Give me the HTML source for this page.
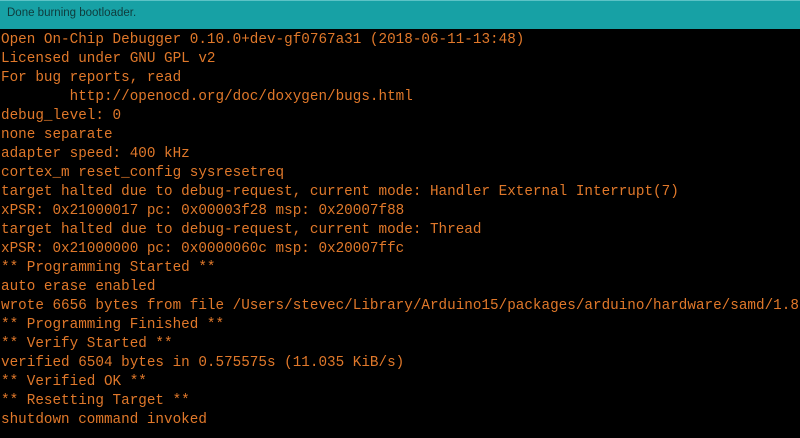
<!DOCTYPE html>
<html><head><style>
html,body{margin:0;padding:0;width:800px;height:438px;overflow:hidden;background:#000;}
.hdr{position:absolute;left:0;top:0;width:800px;height:29px;background:#17a1a5;border-top:1px solid #5cc3c6;box-sizing:border-box;}
.hdr span{position:absolute;left:7px;top:6px;font:11.5px "Liberation Sans",sans-serif;color:#0f3b3c;}
pre{position:absolute;left:1px;top:31px;margin:0;font:14.3px/19px "Liberation Mono",monospace;color:#e0782a;white-space:pre;}
</style></head><body>
<div class="hdr"><span>Done burning bootloader.</span></div>
<pre>Open On-Chip Debugger 0.10.0+dev-gf0767a31 (2018-06-11-13:48)
Licensed under GNU GPL v2
For bug reports, read
	http://openocd.org/doc/doxygen/bugs.html
debug_level: 0
none separate
adapter speed: 400 kHz
cortex_m reset_config sysresetreq
target halted due to debug-request, current mode: Handler External Interrupt(7)
xPSR: 0x21000017 pc: 0x00003f28 msp: 0x20007f88
target halted due to debug-request, current mode: Thread 
xPSR: 0x21000000 pc: 0x0000060c msp: 0x20007ffc
** Programming Started **
auto erase enabled
wrote 6656 bytes from file /Users/stevec/Library/Arduino15/packages/arduino/hardware/samd/1.8
** Programming Finished **
** Verify Started **
verified 6504 bytes in 0.575575s (11.035 KiB/s)
** Verified OK **
** Resetting Target **
shutdown command invoked</pre>
</body></html>
